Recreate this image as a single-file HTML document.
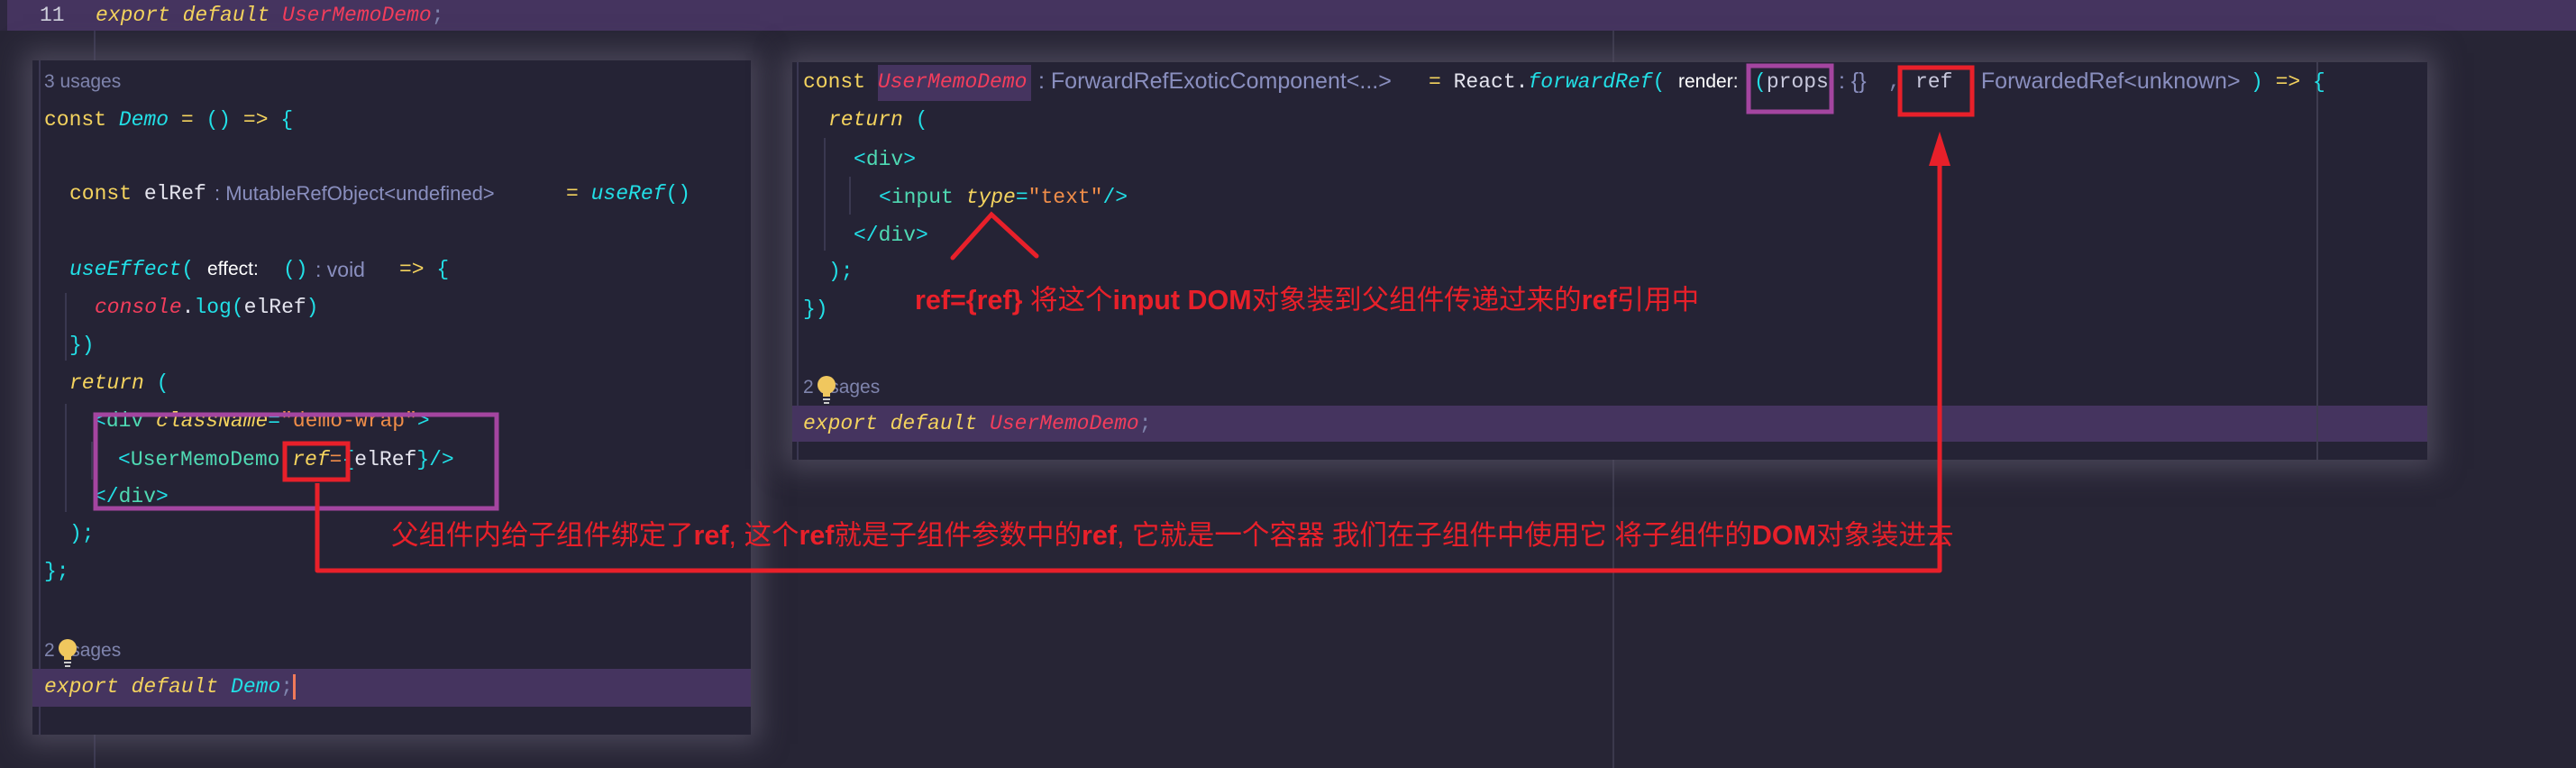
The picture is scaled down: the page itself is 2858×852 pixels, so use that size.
<!DOCTYPE html>
<html><head><meta charset="utf-8"><style>
*{margin:0;padding:0;box-sizing:border-box}
body{width:2858px;height:852px;background:#272535;position:relative;overflow:hidden;font-family:"Liberation Mono",monospace;font-size:23px}
.a{position:absolute;white-space:pre;line-height:30px}
.bar{position:absolute;left:0;top:0;width:2858px;height:34px;background:#45345f}
.panel{position:absolute;background:#252335;box-shadow:0 0 28px 10px rgba(85,82,100,.75)}
.y{color:#f4d35e}.yi{color:#f4d35e;font-style:italic}.c{color:#22dfe6}.ci{color:#22dfe6;font-style:italic}
.p{color:#f23d5c}.pi{color:#f23d5c;font-style:italic}.w{color:#e4e4ee}.g{color:#4fd9b3}.o{color:#f08d49}
.h{color:#8a8fbf;font-family:"Liberation Sans",sans-serif;font-size:22px}
.s{color:#fff;font-family:"Liberation Sans",sans-serif;font-size:21px}
.u{color:#7f84ad}
.red{color:#e8202a;font-family:"Liberation Sans","Noto Sans CJK SC",sans-serif;font-size:30.5px}
.red b{font-weight:bold}
.vl{position:absolute;width:2px;background:#3a3850}
</style></head><body>
<div class="vl" style="left:1789px;top:0;height:852px;background:#3b394c"></div>
<div class="vl" style="left:104px;top:34px;height:818px"></div>
<div class="bar"></div>
<div style="position:absolute;left:0;top:0;width:8px;height:34px;background:#2e2840"></div>
<div class="a w" style="left:44px;top:2px;color:#cfd0dc">11</div>
<div class="a" style="left:106px;top:2px"><span class="yi">export default </span><span class="pi">UserMemoDemo</span><span class="u">;</span></div>

<!-- left panel -->
<div class="panel" style="left:36px;top:67px;width:797px;height:748px"></div>
<div class="vl" style="left:43px;top:67px;height:748px;background:#3b3852"></div>
<div style="position:absolute;left:36px;top:742px;width:797px;height:42px;background:#45345f"></div>
<div class="vl" style="left:72px;top:325px;height:75px"></div>
<div class="vl" style="left:72px;top:448px;height:120px"></div>
<div class="vl" style="left:101px;top:490px;height:42px"></div>
<div class="a u" style="left:49px;top:76px;font-family:'Liberation Sans',sans-serif;font-size:21px">3 usages</div>
<div class="a" style="left:49px;top:118px"><span class="y">const </span><span class="ci">Demo</span><span class="y"> = </span><span class="c">() </span><span class="y">=&gt; </span><span class="c">{</span></div>
<div class="a" style="left:77px;top:200px"><span class="y">const </span><span class="w">elRef</span></div>
<div class="a h" style="left:238px;top:200px">: MutableRefObject&lt;undefined&gt;</div>
<div class="a" style="left:628px;top:200px"><span class="y">= </span><span class="ci">useRef</span><span class="c">()</span></div>
<div class="a" style="left:77px;top:284px"><span class="ci">useEffect</span><span class="c">(</span></div>
<div class="a s" style="left:230px;top:284px">effect:</div>
<div class="a c" style="left:314px;top:284px">()</div>
<div class="a h" style="left:350px;top:284px;font-size:23px">: void</div>
<div class="a" style="left:443px;top:284px"><span class="y">=&gt; </span><span class="c">{</span></div>
<div class="a" style="left:105px;top:326px"><span class="pi">console</span><span class="w">.</span><span class="c">log(</span><span class="w">elRef</span><span class="c">)</span></div>
<div class="a c" style="left:77px;top:368px">})</div>
<div class="a" style="left:77px;top:410px"><span class="yi">return </span><span class="c">(</span></div>
<div class="a" style="left:104px;top:452px"><span class="c">&lt;</span><span class="g">div </span><span class="yi">className</span><span class="c">=</span><span class="o">"demo-wrap"</span><span class="c">&gt;</span></div>
<div class="a" style="left:131px;top:495px"><span class="c">&lt;</span><span class="g">UserMemoDemo </span><span class="yi">ref</span><span class="o">=</span><span class="c">{</span><span class="w">elRef</span><span class="c">}/&gt;</span></div>
<div class="a" style="left:104px;top:536px"><span class="c">&lt;/</span><span class="g">div</span><span class="c">&gt;</span></div>
<div class="a c" style="left:77px;top:577px">);</div>
<div class="a c" style="left:49px;top:619px">};</div>
<div class="a u" style="left:49px;top:707px;font-family:'Liberation Sans',sans-serif;font-size:21px">2 usages</div>
<div class="a" style="left:49px;top:747px"><span class="yi">export default </span><span class="ci">Demo</span><span class="u">;</span><span style="display:inline-block;width:3px;height:28px;background:#f07a5a;vertical-align:middle"></span></div>

<!-- right panel -->
<div class="panel" style="left:879px;top:69px;width:1814px;height:441px"></div>
<div class="vl" style="left:884px;top:69px;height:441px;background:#3b3852"></div>
<div style="position:absolute;left:879px;top:450px;width:1814px;height:40px;background:#45345f"></div>
<div class="vl" style="left:2570px;top:69px;height:441px;background:#3e3c50"></div>
<div style="position:absolute;left:974px;top:72px;width:170px;height:40px;background:#45345f"></div>
<div class="vl" style="left:914px;top:153px;height:125px"></div>
<div class="vl" style="left:942px;top:196px;height:42px"></div>
<div class="a" style="left:891px;top:76px"><span class="y">const </span><span class="pi">UserMemoDemo</span></div>
<div class="a h" style="left:1152px;top:75px;font-size:25px">: ForwardRefExoticComponent&lt;...&gt;</div>
<div class="a" style="left:1585px;top:76px"><span class="y">= </span><span class="w">React.</span><span class="ci">forwardRef</span><span class="c">(</span></div>
<div class="a s" style="left:1862px;top:76px">render:</div>
<div class="a" style="left:1946px;top:76px"><span class="c">(</span><span class="w" style="color:#c8c8dc">props</span></div>
<div class="a h" style="left:2040px;top:75px;font-size:25px">: {}</div>
<div class="a u" style="left:2095px;top:76px">,</div>
<div class="a w" style="left:2125px;top:76px;color:#c8c8dc">ref</div>
<div class="a h" style="left:2184px;top:75px;font-size:25px">: ForwardedRef&lt;unknown&gt;</div>
<div class="a" style="left:2497px;top:76px"><span class="c">)</span><span class="y"> =&gt; </span><span class="c">{</span></div>
<div class="a" style="left:919px;top:118px"><span class="yi">return </span><span class="c">(</span></div>
<div class="a" style="left:947px;top:162px"><span class="c">&lt;</span><span class="g">div</span><span class="c">&gt;</span></div>
<div class="a" style="left:975px;top:204px"><span class="c">&lt;</span><span class="g">input </span><span class="yi">type</span><span class="c">=</span><span class="o">"text"</span><span class="c">/&gt;</span></div>
<div class="a" style="left:947px;top:246px"><span class="c">&lt;/</span><span class="g">div</span><span class="c">&gt;</span></div>
<div class="a c" style="left:919px;top:286px">);</div>
<div class="a c" style="left:891px;top:328px">})</div>
<div class="a u" style="left:891px;top:415px;font-family:'Liberation Sans',sans-serif;font-size:21px">2 usages</div>
<div class="a" style="left:891px;top:455px"><span class="yi">export default </span><span class="pi">UserMemoDemo</span><span class="u">;</span></div>

<!-- bulbs -->
<svg style="position:absolute;left:64px;top:708px" width="22" height="34"><circle cx="11" cy="11" r="10" fill="#f0c75e"/><rect x="7" y="20" width="8" height="4" fill="#f0c75e"/><rect x="7" y="26" width="8" height="2" fill="#ccc"/><rect x="8" y="30" width="6" height="2" fill="#ccc"/></svg>
<svg style="position:absolute;left:906px;top:416px" width="22" height="34"><circle cx="11" cy="11" r="10" fill="#f0c75e"/><rect x="7" y="20" width="8" height="4" fill="#f0c75e"/><rect x="7" y="26" width="8" height="2" fill="#ccc"/><rect x="8" y="30" width="6" height="2" fill="#ccc"/></svg>

<!-- annotations -->
<svg style="position:absolute;left:0;top:0" width="2858" height="852">
<rect x="106" y="460" width="445" height="104" fill="none" stroke="#a445a0" stroke-width="5"/>
<rect x="316" y="492" width="70" height="40" fill="none" stroke="#e8202a" stroke-width="5"/>
<rect x="1940" y="73" width="92" height="51" fill="none" stroke="#a445a0" stroke-width="5"/>
<rect x="2108" y="75" width="80" height="52" fill="none" stroke="#e8202a" stroke-width="5"/>
<polyline points="352,536 352,633 2152,633 2152,180" fill="none" stroke="#e8202a" stroke-width="5" stroke-linejoin="round"/>
<polygon points="2152,146 2140,184 2164,184" fill="#e8202a"/>
<polyline points="1057,286 1100,238 1150,284" fill="none" stroke="#e8202a" stroke-width="5" stroke-linecap="round"/>
</svg>
<div class="a red" style="left:434px;top:575px;line-height:38px">父组件内给子组件绑定了<b>ref</b>, 这个<b>ref</b>就是子组件参数中的<b>ref</b>, 它就是一个容器 我们在子组件中使用它 将子组件的<b>DOM</b>对象装进去</div>
<div class="a red" style="left:1015px;top:314px;line-height:38px"><b>ref={ref}</b> 将这个<b>input DOM</b>对象装到父组件传递过来的<b>ref</b>引用中</div>
</body></html>
